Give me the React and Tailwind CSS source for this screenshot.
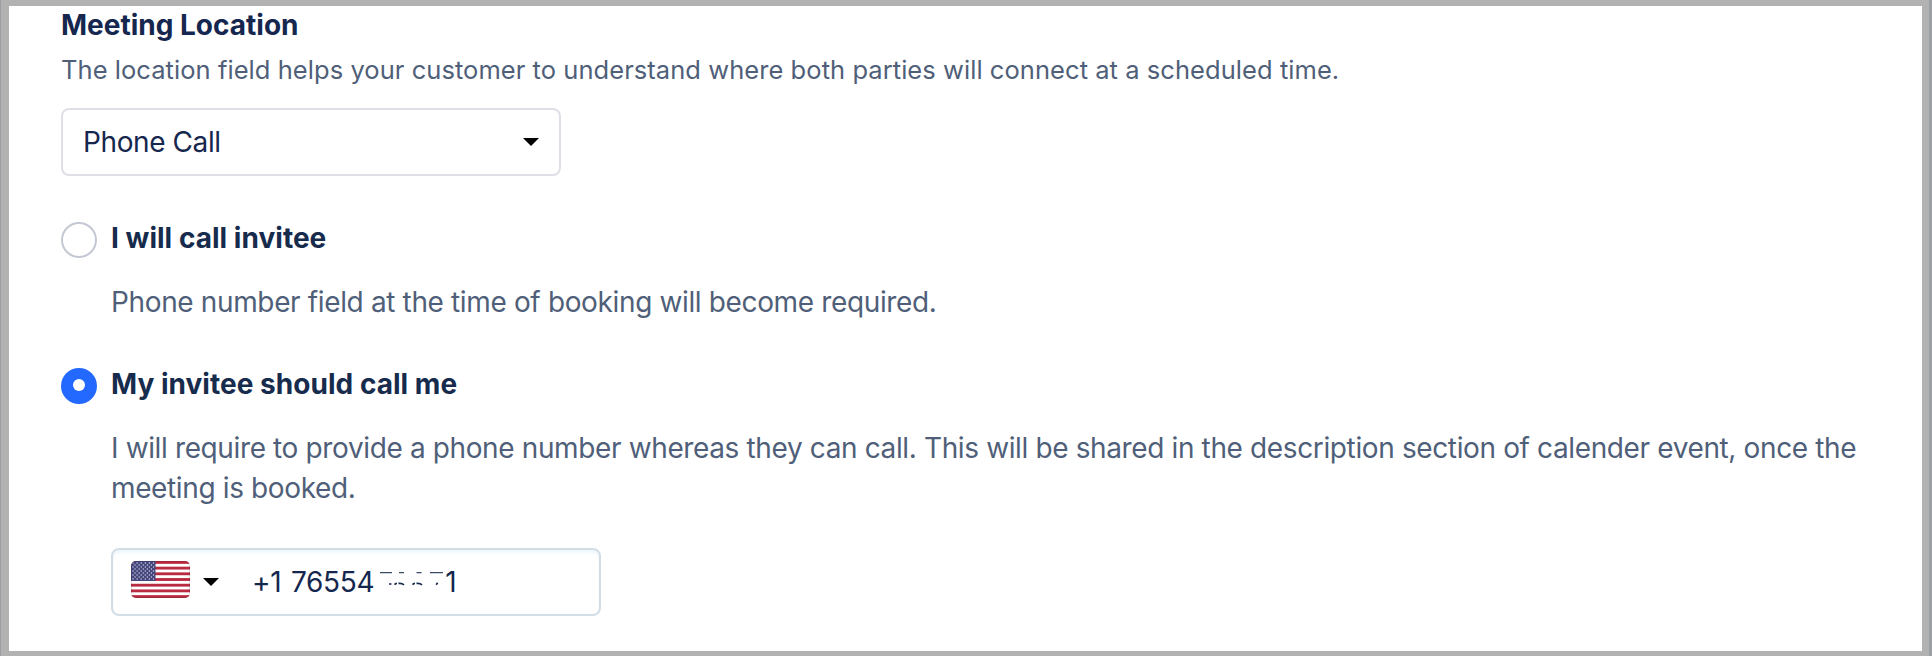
import React from "react";

function Caret() {
  return (
    <svg width="16" height="8" viewBox="0 0 16 8" className="block shrink-0">
      <path d="M0 0h16L8 8z" fill="#000" />
    </svg>
  );
}

function Radio({ checked }) {
  return checked ? (
    <span className="mt-0.5 flex size-9 shrink-0 items-center justify-center rounded-full bg-[#2469ff]">
      <span className="-mt-0.5 size-3 rounded-full bg-white" />
    </span>
  ) : (
    <span className="mt-0.5 size-9 shrink-0 rounded-full border-2 border-[#c4c8d3] bg-white" />
  );
}

function Option({ checked, title, children }) {
  return (
    <div className="mt-11 flex gap-3.5">
      <Radio checked={checked} />
      <div className="min-w-0">
        <div className="h-[38px] text-[28px] leading-9 font-bold tracking-[0.03px] text-[#172b4d]">{title}</div>
        {children}
      </div>
    </div>
  );
}

const STRIPES = [0, 2, 4, 6, 8, 10, 12];
const STAR_ROWS = [0, 1, 2, 3, 4, 5, 6, 7, 8];

function UsFlag() {
  return (
    <svg width="59" height="37" viewBox="0 0 59 37" className="block shrink-0">
      <defs>
        <clipPath id="flag-round">
          <rect width="59" height="37" rx="5" />
        </clipPath>
      </defs>
      <g clipPath="url(#flag-round)">
        <rect width="59" height="37" fill="#fff" />
        {STRIPES.map((i) => (
          <rect key={i} y={i * 2.846} width="59" height="2.846" fill="#b92b41" />
        ))}
        <rect width="24.5" height="20" fill="#46467f" />
        {STAR_ROWS.map((r) =>
          Array.from({ length: r % 2 ? 5 : 6 }, (_, c) => (
            <circle key={r + "-" + c} cx={2 + (r % 2) * 2.05 + c * 4.1} cy={2 + r * 2} r="0.7" fill="#d4d4e2" />
          ))
        )}
      </g>
      <rect x="0.5" y="0.5" width="58" height="36" rx="4.5" fill="none" stroke="#000" strokeOpacity="0.12" />
    </svg>
  );
}

// Leftover marks of the masked digits
function MaskedDigits() {
  return (
    <svg width="73" height="20" viewBox="0 0 73 20" className="block shrink-0" stroke="#172b4d" fill="none">
      <path d="M6 0.6h12M25 0.6h5M42.500 0.6h5M56 0.6h13" strokeWidth="1.2" strokeOpacity="0.85" />
      <path d="M15 12h2.500M20.500 12.600q1-1.200 2.500-1.200M24.500 11.400q3.500-.4 5.500 1.400M38.500 12.600q1-1.200 2.500-1.200M42.500 11.400q3.500-.4 5.500 1.400M62.200 12.800l1.400-2" strokeWidth="1.7" />
    </svg>
  );
}

export default function App() {
  return (
    <div className="flex h-[656px] w-[1932px] border-r-[3px] border-l border-[#9b9fa4] font-['Inter','Liberation_Sans',sans-serif]">
      <div className="flex-1 border-t-[6px] border-r-[7px] border-b-[5px] border-l-8 border-[#b2b2b2] bg-white pt-px pl-[52px]">
        <h2 className="text-[28px] leading-9 font-bold text-[#15274e]">Meeting Location</h2>
        <p className="mt-[9px] text-[25.500px] leading-9 tracking-[0.055px] text-[#505f79]">
          The location field helps your customer to understand where both parties will connect at a scheduled time.
        </p>
        <div className="mt-5 flex h-[68px] w-[500px] items-center justify-between rounded-lg border-2 border-[#dfe0e7] pr-5 pl-5">
          <span className="text-[28px] leading-9 tracking-[-0.4px] text-[#15274e]">Phone Call</span>
          <Caret />
        </div>

        <Option title="I will call invitee">
          <p className="mt-6 text-[28px] leading-10 tracking-[-0.36px] text-[#505f79]">
            Phone number field at the time of booking will become required.
          </p>
        </Option>

        <Option checked title="My invitee should call me">
          <p className="mt-6 w-[1770px] text-[28px] leading-10 tracking-[-0.372px] text-[#505f79]">
            I will require to provide a phone number whereas they can call. This will be shared in the description
            section of calender event, once the meeting is booked.
          </p>
          <div className="mt-10 flex h-[68px] w-[490px] items-center rounded-lg border-2 border-[#d3dde6] pl-[18px] shadow-[inset_0_3px_3px_#f0f8fd]">
            <div className="-mt-[5px]">
              <UsFlag />
            </div>
            <div className="ml-[13px]">
              <Caret />
            </div>
            <div className="ml-[33px] flex items-center text-[28px] leading-9 tracking-[-0.3px] text-[#15274e]">
              <span className="[word-spacing:2px]">+1 76554</span>
              <MaskedDigits />
              <span className="-ml-[2px]">1</span>
            </div>
          </div>
        </Option>
      </div>
    </div>
  );
}
